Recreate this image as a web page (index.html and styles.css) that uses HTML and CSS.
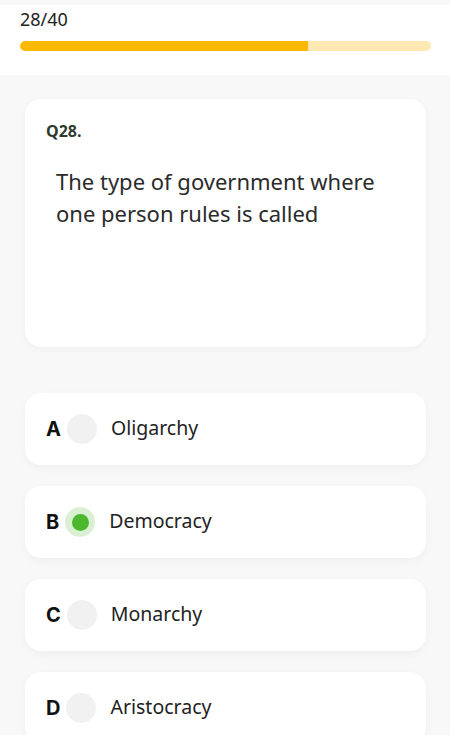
FILE: index.html
```html
<!doctype html>
<html lang="en">
  <head>
    <meta charset="UTF-8" />
    <meta name="viewport" content="width=device-width, initial-scale=1.0" />
    <title>Quiz</title>
    <link rel="stylesheet" href="styles.css">
  </head>
  <body>
    <header class="progress-header">
      <div class="count">28/40</div>
      <div class="bar">
        <div class="bar-fill" style="width: 70%"></div>
      </div>
    </header>

    <main class="quiz">
      <section class="question-card">
        <div class="q-number">Q28.</div>
        <p class="q-text">The type of government where one person rules is called</p>
      </section>

      <ul class="options">
        <li class="option">
          <span class="letter">A</span>
          <span class="radio"></span>
          <span class="label">Oligarchy</span>
        </li>
        <li class="option selected">
          <span class="letter">B</span>
          <span class="radio"></span>
          <span class="label">Democracy</span>
        </li>
        <li class="option">
          <span class="letter">C</span>
          <span class="radio"></span>
          <span class="label">Monarchy</span>
        </li>
        <li class="option">
          <span class="letter">D</span>
          <span class="radio"></span>
          <span class="label">Aristocracy</span>
        </li>
      </ul>
    </main>
  </body>
</html>
```

FILE: styles.css
```css
* {
  margin: 0;
  padding: 0;
  box-sizing: border-box;
}

body {
  font-family: 'Noto Sans', 'Open Sans', sans-serif;
  background: #f8f8f8;
  color: #2b2b2b;
  padding-top: 5px;
  overflow: hidden;
}

.progress-header {
  background: #fff;
  padding: 2px 19px 24px 20px;
}

.count {
  font-size: 18px;
  line-height: 24px;
  color: #222;
}

.bar {
  margin-top: 10px;
  height: 10px;
  border-radius: 5px;
  background: #ffe8b2;
  overflow: hidden;
}

.bar-fill {
  height: 100%;
  background: #ffb800;
  border-radius: 5px 0 0 5px;
}

.quiz {
  padding: 24px 24px 0 25px;
}

.question-card {
  background: #fff;
  border-radius: 16px;
  height: 248px;
  padding: 21px 21px;
  box-shadow: 0 2px 6px rgba(0, 0, 0, 0.04);
}

.q-number {
  font-size: 16px;
  font-weight: 700;
  color: #2f3a30;
}

.q-text {
  margin-top: 23px;
  padding-left: 10px;
  font-size: 22px;
  line-height: 32px;
  color: #2b2b2b;
  max-width: 350px;
}

.options {
  list-style: none;
  margin-top: 46px;
  display: flex;
  flex-direction: column;
  gap: 21px;
}

.option {
  background: #fff;
  border-radius: 16px;
  height: 72px;
  padding: 0 21px;
  display: flex;
  align-items: center;
  box-shadow: 0 3px 8px rgba(0, 0, 0, 0.04);
}

.letter {
  font-family: Inter, 'Liberation Sans', sans-serif;
  font-weight: 700;
  font-size: 20px;
  color: #111;
  margin-right: 6px;
}

.radio {
  width: 30px;
  height: 30px;
  border-radius: 50%;
  background: #f1f1f1;
  margin-right: 14px;
  display: flex;
  align-items: center;
  justify-content: center;
}

.option.selected .radio {
  background: #d9f0d2;
}

.option.selected .radio::after {
  content: '';
  width: 17px;
  height: 17px;
  border-radius: 50%;
  background: #4cb82f;
}

.label {
  font-size: 19.5px;
  line-height: 1;
  padding-bottom: 3px;
  color: #222;
}
```
